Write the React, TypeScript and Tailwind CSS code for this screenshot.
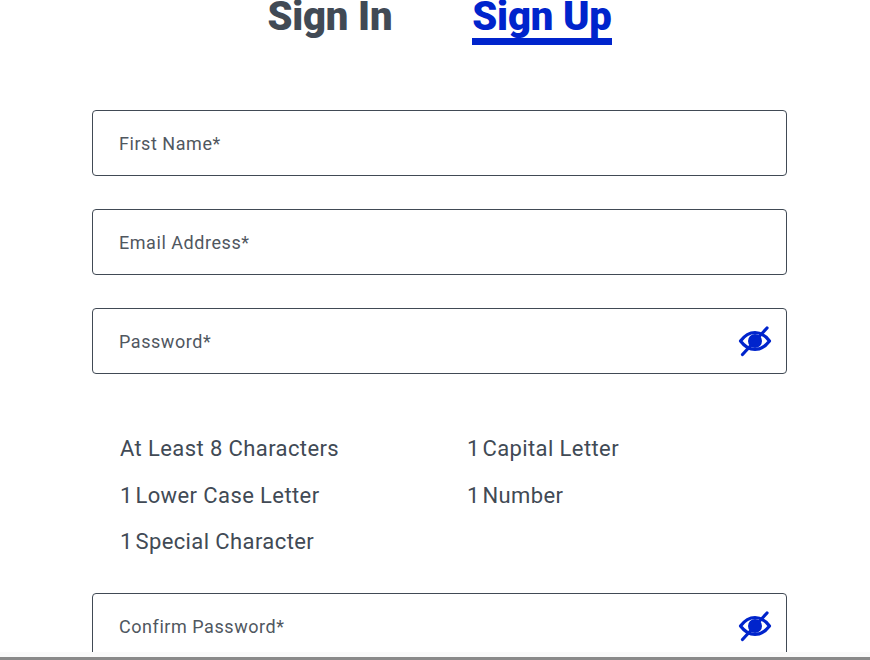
import React from "react";

function EyeOff() {
  return (
    <svg width="34" height="32" viewBox="0 0 34 32" fill="none" className="block">
      <path d="M2.5 16 C7 10 12 7.5 17 7.5 C22 7.5 27 10 31.5 16 C27 22 22 24.5 17 24.5 C12 24.5 7 22 2.5 16 Z" stroke="#0024cc" strokeWidth="3.2" strokeLinejoin="round" />
      <circle cx="17" cy="16" r="7" fill="#0024cc" />
      <path d="M4.5 29.5 L29 3" stroke="#0024cc" strokeWidth="3.2" strokeLinecap="round" />
    </svg>
  );
}

function Field({ label, eye, className = "" }: { label: string; eye?: boolean; className?: string }) {
  return (
    <div className={`flex h-[66px] w-[695px] shrink-0 items-center justify-between rounded border border-[#414a55] pl-[26px] pr-[14px] ${className}`}>
      <span className="text-[18px] tracking-[0.55px] text-[#50575f]">{label}</span>
      {eye && <EyeOff />}
    </div>
  );
}

function One({ text }: { text: string }) {
  return (
    <span>
      <span className="tracking-[-1.2px]">1 </span>
      {text}
    </span>
  );
}

export default function App() {
  return (
    <div className="h-[660px] w-[870px] overflow-hidden bg-white font-['Roboto','Liberation_Sans',sans-serif]">
      <div className="h-[652px] overflow-hidden pl-[92px]">
        <div className="flex h-[45px] w-[695px] items-start justify-center gap-[80px]">
          <span className="text-[40px] leading-[33px] font-black tracking-[-0.2px] text-[#414a55]">Sign In</span>
          <span className="h-[45px] border-b-[7px] border-[#0024cc] text-[40px] leading-[33px] font-black tracking-[-0.2px] text-[#0024cc]">Sign Up</span>
        </div>
        <div className="mt-[65px] flex flex-col gap-[33px]">
          <Field label="First Name*" />
          <Field label="Email Address*" />
          <Field label="Password*" eye />
        </div>
        <div className="mt-[63px] grid w-[695px] grid-cols-[347px_1fr] gap-y-[22.5px] pl-[28px] text-[22px] leading-[24px] tracking-[0.4px] text-[#414a55]">
          <span>At Least 8 Characters</span>
          <One text="Capital Letter" />
          <One text="Lower Case Letter" />
          <One text="Number" />
          <One text="Special Character" />
        </div>
        <Field label="Confirm Password*" eye className="mt-[39px]" />
      </div>
      <div className="h-[5px] bg-[#fafafa]" />
      <div className="h-[3px] bg-[#8a8a8a]" />
    </div>
  );
}
